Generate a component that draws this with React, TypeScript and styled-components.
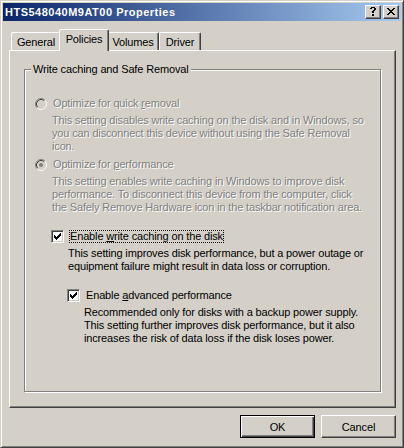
import React from "react";
import styled, { createGlobalStyle } from "styled-components";

const GlobalStyle = createGlobalStyle`
    html, body {
        margin: 0;
        padding: 0;
        background: #d4d0c8;
    }
    body {
        font-family: "Liberation Sans", Arial, sans-serif;
        font-size: 11px;
        letter-spacing: -0.15px;
        color: #000;
    }
`;

const Window = styled.div`
    box-sizing: border-box;
    width: 404px;
    height: 448px;
    display: flex;
    flex-direction: column;
    padding: 2px;
    background: #d4d0c8;
    border: 1px solid;
    border-color: #d4d0c8 #404040 #404040 #d4d0c8;
    box-shadow: inset 1px 1px 0 #fff, inset -1px -1px 0 #808080;
`;

const TitleBar = styled.div`
    height: 18px;
    display: flex;
    align-items: center;
    justify-content: space-between;
    padding: 0 2px;
    background: linear-gradient(to right, #0a246a, #a6caf0);
`;

const TitleText = styled.span`
    color: #fff;
    font-weight: bold;
    letter-spacing: 0.5px;
    line-height: 18px;
    white-space: nowrap;
`;

const CaptionButtons = styled.div`
    display: flex;
    gap: 2px;
`;

const CaptionButton = styled.div`
    box-sizing: border-box;
    width: 16px;
    height: 14px;
    display: flex;
    align-items: center;
    justify-content: center;
    background: #d4d0c8;
    border: 1px solid;
    border-color: #fff #404040 #404040 #fff;
    box-shadow: inset -1px -1px 0 #808080;
    padding: 0 1px 1px 0;
`;

const Body = styled.div`
    flex: 1;
    display: flex;
    flex-direction: column;
    padding: 8px 5px 7px 6px;
`;

const TabStrip = styled.div`
    display: flex;
    align-items: flex-end;
    padding-left: 2px;
`;

const Tab = styled.div<{ $active?: boolean; $w: number }>`
    box-sizing: border-box;
    position: relative;
    z-index: ${(p) => (p.$active ? 2 : 0)};
    width: ${(p) => (p.$active ? p.$w + 4 : p.$w)}px;
    height: ${(p) => (p.$active ? 22 : 18)}px;
    margin: 0 ${(p) => (p.$active ? -2 : 0)}px ${(p) => (p.$active ? -1 : 0)}px;
    padding-bottom: ${(p) => (p.$active ? 3 : 0)}px;
    display: flex;
    align-items: center;
    justify-content: center;
    background: #d4d0c8;
    border: 1px solid;
    border-bottom: none;
    border-color: #fff #404040 transparent #fff;
    border-radius: 2px 2px 0 0;
    box-shadow: inset -1px 0 0 #808080;
    white-space: nowrap;
`;

const Panel = styled.div`
    position: relative;
    z-index: 1;
    flex: 1;
    display: flex;
    flex-direction: column;
    padding: 12px 14px 15px 14px;
    border: 1px solid;
    border-color: #fff #404040 #404040 #fff;
    box-shadow: inset -1px -1px 0 #808080;
`;

const GroupBox = styled.fieldset`
    flex: 1;
    margin: 0;
    padding: 21px 10px 0 10px;
    min-width: 0;
    border: 1px solid #808080;
    box-shadow: 1px 1px 0 #fff, inset 1px 1px 0 #fff;
`;

const GroupTitle = styled.legend`
    margin-left: -4px;
    padding: 0 2px;
    line-height: 13px;
    background: #d4d0c8;
`;

const Option = styled.div<{ $gap?: number }>`
    margin-top: ${(p) => p.$gap ?? 0}px;
`;

const OptionRow = styled.div<{ $indent?: number }>`
    display: flex;
    align-items: center;
    height: 13px;
    padding-left: ${(p) => p.$indent ?? 0}px;
`;

const OptionText = styled.span<{ $disabled?: boolean; $focused?: boolean }>`
    margin-left: 5px;
    line-height: 11px;
    border: 1px ${(p) => (p.$focused ? "dotted #000" : "solid transparent")};
    white-space: nowrap;
    color: ${(p) => (p.$disabled ? "#808080" : "#000")};
    text-shadow: ${(p) => (p.$disabled ? "1px 1px 0 #fff" : "none")};

    u {
        text-decoration-thickness: 1px;
        text-underline-offset: 1px;
    }
`;

const Desc = styled.div<{ $indent: number; $disabled?: boolean }>`
    margin-top: 4px;
    padding-left: ${(p) => p.$indent}px;
    line-height: 13px;
    white-space: nowrap;
    color: ${(p) => (p.$disabled ? "#808080" : "#000")};
    text-shadow: ${(p) => (p.$disabled ? "1px 1px 0 #fff" : "none")};
`;

const CheckBox = styled.span`
    box-sizing: border-box;
    flex: none;
    width: 13px;
    height: 13px;
    display: flex;
    align-items: center;
    justify-content: center;
    background: #fff;
    border: 1px solid;
    border-color: #808080 #fff #fff #808080;
    box-shadow: inset 1px 1px 0 #404040, inset -1px -1px 0 #d4d0c8;
`;

const ButtonRow = styled.div`
    display: flex;
    justify-content: flex-end;
    gap: 6px;
    margin-top: 7px;
`;

const DialogButton = styled.div<{ $default?: boolean }>`
    box-sizing: border-box;
    width: 75px;
    height: 23px;
    display: flex;
    align-items: center;
    justify-content: center;
    background: #d4d0c8;
    border: 1px solid;
    border-color: ${(p) => (p.$default ? "#000" : "#fff #404040 #404040 #fff")};
    box-shadow: ${(p) =>
        p.$default
            ? "inset 1px 1px 0 #fff, inset -1px -1px 0 #404040, inset -2px -2px 0 #808080"
            : "inset -1px -1px 0 #808080"};
`;

function HelpGlyph() {
    return (
        <svg width="6" height="9" viewBox="0 0 6 9" shapeRendering="crispEdges">
            <path d="M1 0h4v1h-4z M0 1h2v1h-2z M4 1h2v2h-2z M3 3h2v1h-2z M2 4h2v2h-2z M2 7h2v2h-2z" fill="#000" />
        </svg>
    );
}

function CloseGlyph() {
    return (
        <svg width="8" height="7" viewBox="0 0 8 7" shapeRendering="crispEdges">
            <path
                d="M0 0h2v1h-2z M6 0h2v1h-2z M1 1h2v1h-2z M5 1h2v1h-2z M2 2h4v1h-4z M3 3h2v1h-2z M2 4h4v1h-4z M1 5h2v1h-2z M5 5h2v1h-2z M0 6h2v1h-2z M6 6h2v1h-2z"
                fill="#000"
            />
        </svg>
    );
}

function CheckGlyph() {
    return (
        <svg width="7" height="7" viewBox="0 0 7 7" shapeRendering="crispEdges">
            <path d="M6 0h1v1h-1z M5 1h2v1h-2z M0 2h1v1h-1z M4 2h3v1h-3z M0 3h2v1h-2z M3 3h3v1h-3z M0 4h5v1h-5z M1 5h3v1h-3z M2 6h1v1h-1z" fill="#000" />
        </svg>
    );
}

// classic sunken radio, drawn greyed out
function Radio({ checked }: { checked?: boolean }) {
    return (
        <svg width="12" height="12" viewBox="0 0 12 12" style={{ flex: "none" }}>
            <circle cx="6" cy="6" r="4.5" fill="#d4d0c8" />
            <path d="M2.11 9.89 A5.5 5.5 0 0 1 9.89 2.11" fill="none" stroke="#808080" />
            <path d="M9.89 2.11 A5.5 5.5 0 0 1 2.11 9.89" fill="none" stroke="#fff" />
            <path d="M2.82 9.18 A4.5 4.5 0 0 1 9.18 2.82" fill="none" stroke="#404040" />
            <path d="M9.18 2.82 A4.5 4.5 0 0 1 2.82 9.18" fill="none" stroke="#d4d0c8" />
            {checked && <circle cx="6" cy="6" r="2" fill="#808080" />}
        </svg>
    );
}

const tabs = [
    { label: "General", w: 50 },
    { label: "Policies", w: 46, active: true },
    { label: "Volumes", w: 52 },
    { label: "Driver", w: 42 },
];

function App() {
    return (
        <>
            <GlobalStyle />
            <Window>
                <TitleBar>
                    <TitleText>HTS548040M9AT00 Properties</TitleText>
                    <CaptionButtons>
                        <CaptionButton>
                            <HelpGlyph />
                        </CaptionButton>
                        <CaptionButton>
                            <CloseGlyph />
                        </CaptionButton>
                    </CaptionButtons>
                </TitleBar>

                <Body>
                    <TabStrip>
                        {tabs.map((t) => (
                            <Tab key={t.label} $w={t.w} $active={t.active}>
                                {t.label}
                            </Tab>
                        ))}
                    </TabStrip>

                    <Panel>
                        <GroupBox>
                            <GroupTitle>Write caching and Safe Removal</GroupTitle>

                            <Option>
                                <OptionRow>
                                    <Radio />
                                    <OptionText $disabled>
                                        Optimize for quick <u>r</u>emoval
                                    </OptionText>
                                </OptionRow>
                                <Desc $indent={17} $disabled>
                                    This setting disables write caching on the disk and in Windows, so
                                    <br />
                                    you can disconnect this device without using the Safe Removal
                                    <br />
                                    icon.
                                </Desc>
                            </Option>

                            <Option $gap={5}>
                                <OptionRow>
                                    <Radio checked />
                                    <OptionText $disabled>
                                        Optimize for <u>p</u>erformance
                                    </OptionText>
                                </OptionRow>
                                <Desc $indent={17} $disabled>
                                    This setting enables write caching in Windows to improve disk
                                    <br />
                                    performance. To disconnect this device from the computer, click
                                    <br />
                                    the Safely Remove Hardware icon in the taskbar notification area.
                                </Desc>
                            </Option>

                            <Option $gap={16}>
                                <OptionRow $indent={16}>
                                    <CheckBox>
                                        <CheckGlyph />
                                    </CheckBox>
                                    <OptionText $focused>
                                        Enable <u>w</u>rite caching on the disk
                                    </OptionText>
                                </OptionRow>
                                <Desc $indent={33}>
                                    This setting improves disk performance, but a power outage or
                                    <br />
                                    equipment failure might result in data loss or corruption.
                                </Desc>
                            </Option>

                            <Option $gap={16}>
                                <OptionRow $indent={32}>
                                    <CheckBox>
                                        <CheckGlyph />
                                    </CheckBox>
                                    <OptionText>
                                        Enable <u>a</u>dvanced performance
                                    </OptionText>
                                </OptionRow>
                                <Desc $indent={49}>
                                    Recommended only for disks with a backup power supply.
                                    <br />
                                    This setting further improves disk performance, but it also
                                    <br />
                                    increases the risk of data loss if the disk loses power.
                                </Desc>
                            </Option>
                        </GroupBox>
                    </Panel>

                    <ButtonRow>
                        <DialogButton $default>OK</DialogButton>
                        <DialogButton>Cancel</DialogButton>
                    </ButtonRow>
                </Body>
            </Window>
        </>
    );
}

export default App;
